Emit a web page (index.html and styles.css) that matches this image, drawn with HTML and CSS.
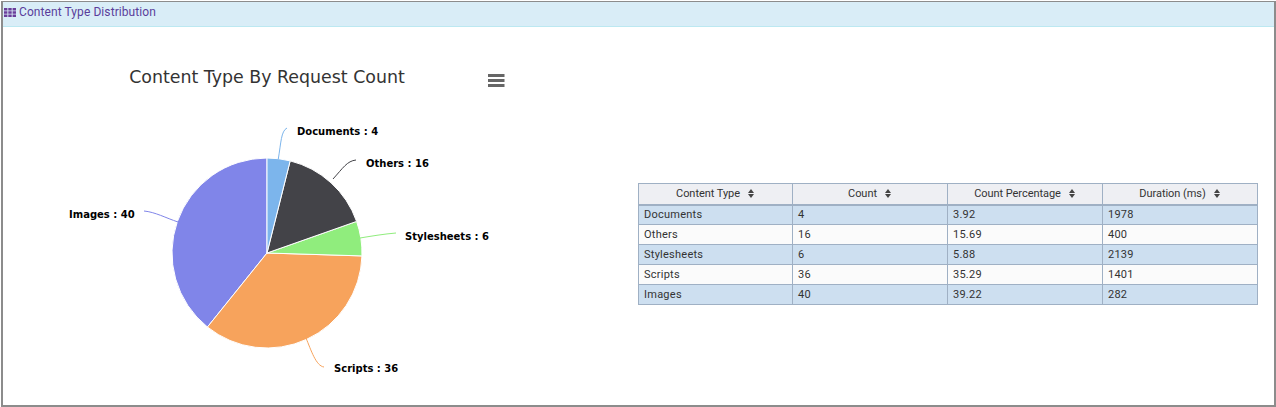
FILE: index.html
```html
<!DOCTYPE html>
<html lang="en">
<head>
<meta charset="utf-8">
<title>Content Type Distribution</title>
<link rel="stylesheet" href="styles.css">
</head>
<body>
<section class="panel">
  <header class="panel-head">
    <svg class="grid-icon" width="12" height="9" viewBox="0 0 12 9"><path d="M0 0h3.4v2.4H0zM4.3 0h3.4v2.4H4.3zM8.6 0H12v2.4H8.6zM0 3.3h3.4v2.4H0zM4.3 3.3h3.4v2.4H4.3zM8.6 3.3H12v2.4H8.6zM0 6.6h3.4V9H0zM4.3 6.6h3.4V9H4.3zM8.6 6.6H12V9H8.6z"/></svg>
    <span class="panel-title">Content Type Distribution</span>
  </header>
  <div class="panel-body">
    <svg class="chart" width="635" height="378" viewBox="0 0 635 378">
      <g transform="translate(-3 -27)">
        <text class="chart-title" x="267" y="83" text-anchor="middle">Content Type By Request Count</text>
        <path class="menu-bar" d="M488 74h16.5v3H488zM488 79h16.5v3H488zM488 84h16.5v3H488z"/>
        <g class="slices">
          <path fill="#8085e9" d="M267 253L207.45 327.02A95 95 0 0 1 267 158Z"/>
          <path fill="#f7a35c" d="M267 253L361.96 255.92A95 95 0 0 1 207.45 327.02Z"/>
          <path fill="#90ed7d" d="M267 253L356.6 221.42A95 95 0 0 1 361.96 255.92Z"/>
          <path fill="#434348" d="M267 253L290.17 160.87A95 95 0 0 1 356.6 221.42Z"/>
          <path fill="#7cb5ec" d="M267 253L267 158A95 95 0 0 1 290.17 160.87Z"/>
        </g>
        <g class="leaders">
          <path stroke="#7cb5ec" d="M278.3 159C281 143 281 131 287 128"/>
          <path stroke="#434348" d="M333 179C343 168 347 161 356 160"/>
          <path stroke="#90ed7d" d="M360 238C372 236 384 234 396 233"/>
          <path stroke="#f7a35c" d="M306 338C311 350 316 366 324 367"/>
          <path stroke="#8085e9" d="M178 222C166 218 155 212 144 211"/>
        </g>
        <g class="labels">
          <text x="297" y="135">Documents : 4</text>
          <text x="366" y="167">Others : 16</text>
          <text x="405" y="240">Stylesheets : 6</text>
          <text x="334" y="372">Scripts : 36</text>
          <text x="69" y="218">Images : 40</text>
        </g>
      </g>
    </svg>
    <table class="data-table">
      <thead>
        <tr>
          <th>Content Type<span class="sort"></span></th>
          <th>Count<span class="sort"></span></th>
          <th>Count Percentage<span class="sort"></span></th>
          <th>Duration (ms)<span class="sort"></span></th>
        </tr>
      </thead>
      <tbody>
        <tr><td>Documents</td><td>4</td><td>3.92</td><td>1978</td></tr>
        <tr><td>Others</td><td>16</td><td>15.69</td><td>400</td></tr>
        <tr><td>Stylesheets</td><td>6</td><td>5.88</td><td>2139</td></tr>
        <tr><td>Scripts</td><td>36</td><td>35.29</td><td>1401</td></tr>
        <tr><td>Images</td><td>40</td><td>39.22</td><td>282</td></tr>
      </tbody>
    </table>
  </div>
</section>
</body>
</html>
```
FILE: styles.css
```css
html, body {
  margin: 0;
  padding: 0;
  background: #fff;
}
body {
  padding: 1px 0 0 1px;
  width: 1276px;
  height: 407px;
  box-sizing: border-box;
  overflow: hidden;
  font-family: Roboto, sans-serif;
}
.panel {
  box-sizing: border-box;
  height: 406px;
  border: 2px solid #8c8c8c;
  border-top-width: 1px;
  background: #fff;
}
.panel-head {
  display: flex;
  align-items: center;
  gap: 3px;
  box-sizing: border-box;
  height: 25px;
  padding: 0 0 4px 1px;
  background: #d9edf7;
  border-bottom: 1px solid #bce8f1;
}
.grid-icon {
  fill: #6a3d9a;
  flex: none;
}
.panel-title {
  font-size: 12px;
  letter-spacing: 0.08px;
  color: #5a3d9b;
}
.panel-body {
  display: flex;
  align-items: flex-start;
}
.chart {
  display: block;
  flex: none;
}
.chart-title {
  font-family: "DejaVu Sans", sans-serif;
  font-size: 17.4px;
  fill: #333;
}
.menu-bar {
  fill: #666;
}
.slices path {
  stroke: #fff;
  stroke-width: 1;
  stroke-linejoin: round;
}
.leaders path {
  fill: none;
  stroke-width: 1;
}
.labels text {
  font-family: "DejaVu Sans", sans-serif;
  font-size: 10px;
  font-weight: bold;
  fill: #000;
}
.data-table {
  margin-top: 156px;
  width: 620px;
  table-layout: fixed;
  border-collapse: collapse;
  font-size: 11px;
  color: #333;
  border: 1px solid #9fb0c4;
}
.data-table th {
  width: 155px;
  height: 21px;
  padding: 0;
  box-sizing: border-box;
  background: #eeeff3;
  border: 1px solid #9fb0c4;
  border-bottom: 2px solid #9fb0c4;
  font-weight: normal;
  letter-spacing: -0.05px;
  text-align: center;
}
.data-table th:first-child {
  width: 154px;
}
.data-table td {
  height: 20px;
  padding: 0 0 0 5px;
  box-sizing: border-box;
  border: 1px solid #9fb0c4;
  letter-spacing: 0.25px;
}
.data-table tbody tr:nth-child(odd) td {
  background: #cddff0;
}
.data-table tbody tr:nth-child(even) td {
  background: #fbfbfb;
}
.sort {
  display: inline-block;
  position: relative;
  width: 7px;
  height: 9px;
  margin-left: 8px;
  vertical-align: -1px;
}
.sort::before,
.sort::after {
  content: "";
  position: absolute;
  left: 0;
  border-left: 3.5px solid transparent;
  border-right: 3.5px solid transparent;
}
.sort::before {
  top: 0;
  border-bottom: 4px solid #444;
}
.sort::after {
  bottom: 0;
  border-top: 4px solid #444;
}
```
